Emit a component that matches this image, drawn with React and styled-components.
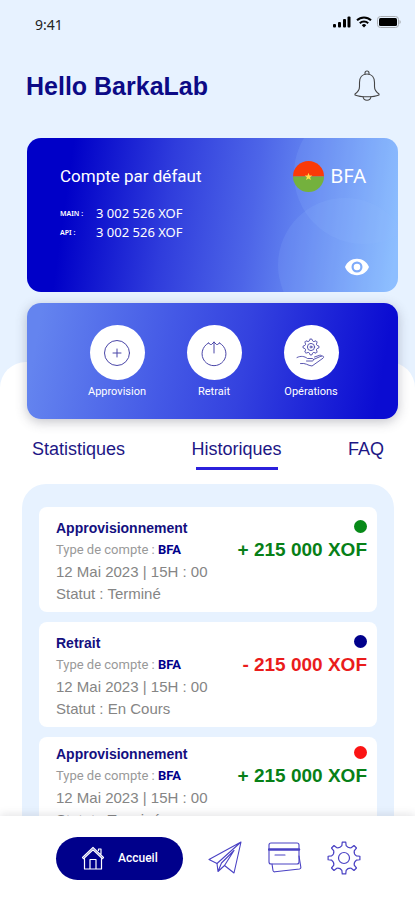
import React from "react";
import styled, { createGlobalStyle } from "styled-components";

const GlobalStyle = createGlobalStyle`
  *, *::before, *::after { box-sizing: border-box; }
  body { margin: 0; background: #fff; font-family: "Liberation Sans", Arial, sans-serif; }
  button { border: 0; padding: 0; background: none; font: inherit; color: inherit; cursor: pointer; }
  h1, h2, h3, p, dl, dd, ul { margin: 0; padding: 0; }
  svg { display: block; }
`;

const navy = "#00008b";
const sky = "#e7f2ff";

const Screen = styled.div`
  display: flex;
  flex-direction: column;
  height: 100vh;
  overflow: hidden;
  background: ${sky};
`;

const Scroller = styled.main`
  flex: 1;
  min-height: 0;
  overflow: hidden;
`;

const StatusBar = styled.div`
  display: flex;
  align-items: center;
  justify-content: space-between;
  height: 48px;
  padding: 0 14px 0 35px;
  color: #222;
  font: 14px "Noto Sans", sans-serif;
`;

const StatusIcons = styled.div`
  display: flex;
  align-items: center;
  gap: 5px;
  padding-bottom: 4px;
`;

const Header = styled.header`
  display: flex;
  align-items: center;
  justify-content: space-between;
  height: 76px;
  padding: 0 34px 0 26px;
`;

const Greeting = styled.h1`
  color: #0c0a86;
  font-size: 25px;
  line-height: 30px;
`;

const AccountCard = styled.section`
  position: relative;
  display: flex;
  flex-direction: column;
  height: 154px;
  margin: 14px 17px 0 27px;
  padding: 22px 32px 16px 33px;
  overflow: hidden;
  border-radius: 14px;
  background: linear-gradient(98deg, #0000c8 12%, #2f3cdc 38%, #4d65e8 60%, #6b90f3 78%, #8cbfff 98%);
  color: #fff;

  &::before, &::after {
    content: "";
    position: absolute;
    border-radius: 50%;
    background: rgba(150, 190, 255, 0.15);
  }
  &::before { width: 140px; height: 140px; top: -34px; right: -36px; }
  &::after { width: 134px; height: 134px; top: 60px; right: -14px; }
  & > * { position: relative; z-index: 1; }
`;

const AccountTop = styled.div`
  display: flex;
  align-items: center;
  justify-content: space-between;
  height: 32px;
`;

const AccountTitle = styled.h2`
  font: 400 17px/24px Roboto, sans-serif;
`;

const Country = styled.div`
  display: flex;
  align-items: center;
  gap: 6px;
  font: 20px/24px "Noto Sans", sans-serif;
`;

const Balances = styled.dl`
  margin-top: 12px;
`;

const Balance = styled.div`
  display: grid;
  grid-template-columns: 36px auto;
  align-items: center;
  height: 19px;
  font: 13px/19px "Noto Sans", sans-serif;

  dt { font-size: 7px; font-weight: 600; }
`;

const EyeButton = styled.button`
  align-self: flex-end;
  margin-top: auto;
  margin-right: -3px;
`;

const Sheet = styled.div`
  display: flow-root;
  margin-top: 70px;
  border-radius: 26px 26px 0 0;
  background: #fff;
`;

const ActionsCard = styled.section`
  display: grid;
  grid-template-columns: repeat(3, 97px);
  justify-content: center;
  height: 116px;
  margin: -59px 17px 0 27px;
  padding: 22px 0 0 3px;
  border-radius: 14px;
  background: linear-gradient(100deg, #6484ef 4%, #4459e6 38%, #3442df 58%, #0b0cd2 94%);
  box-shadow: 0 3px 12px rgba(60, 60, 80, 0.3);
`;

const Action = styled.button`
  display: flex;
  flex-direction: column;
  align-items: center;
  align-self: start;
  gap: 5px;
  color: #fff;
  font: 11px/14px Roboto, sans-serif;
`;

const ActionDisc = styled.span`
  display: grid;
  place-items: center;
  width: 55px;
  height: 55px;
  border-radius: 50%;
  background: #fff;
`;

const Tabs = styled.div`
  display: flex;
  justify-content: space-between;
  padding: 19px 31px 0 32px;
`;

const Tab = styled.button`
  display: flex;
  flex-direction: column;
  align-items: center;
  gap: 7px;
  color: #1d1785;
  font-size: 18px;
  line-height: 22px;

  &::after {
    content: "";
    width: 82px;
    height: 3px;
    background: #2b20dc;
    display: ${(p) => (p["aria-selected"] ? "block" : "none")};
  }
`;

const History = styled.ul`
  display: flex;
  flex-direction: column;
  gap: 10px;
  margin: 14px 21px 0 22px;
  padding: 23px 17px;
  border-radius: 24px 24px 0 0;
  background: ${sky};
  list-style: none;
`;

const Entry = styled.li`
  display: flex;
  justify-content: space-between;
  min-height: 105px;
  padding: ${(p) => (p.$compact ? 6 : 10)}px 10px 7px 17px;
  border-radius: 8px;
  background: #fff;
`;

const EntryTitle = styled.h3`
  color: #14107f;
  font-size: 14px;
  line-height: 22px;
`;

const EntryType = styled.p`
  color: #999;
  font: 13px/22px Roboto, sans-serif;

  strong { color: ${navy}; }
`;

const EntryLine = styled.p`
  color: #858585;
  font-size: 15px;
  line-height: 22px;
`;

const EntryAside = styled.div`
  display: flex;
  flex-direction: column;
  align-items: flex-end;
`;

const StatusDot = styled.span`
  width: 13px;
  height: 13px;
  margin: 3px 0 6px;
  border-radius: 50%;
  background: ${(p) => p.$color};
`;

const Amount = styled.strong`
  color: ${(p) => (p.$negative ? "#ea1c1c" : "#078017")};
  font-size: 19px;
  line-height: 22px;
`;

const BottomNav = styled.nav`
  position: relative;
  display: flex;
  align-items: center;
  justify-content: space-between;
  height: 84px;
  padding: 0 54px 0 56px;
  background: #fff;
  box-shadow: 0 -2px 8px rgba(60, 60, 80, 0.13);
`;

const HomeLink = styled.a`
  display: flex;
  align-items: center;
  gap: 13px;
  width: 127px;
  height: 43px;
  padding-left: 25px;
  border-radius: 22px;
  background: ${navy};
  color: #fff;
  font: 500 12px/16px Roboto, sans-serif;
  text-decoration: none;
`;

const NavLink = styled.a`
  color: #4a42c4;
`;

const gearPath = (cx, cy, teeth, outer, inner) => {
  const step = (Math.PI * 2) / teeth;
  const at = (r, a) => `${(cx + r * Math.sin(a)).toFixed(2)} ${(cy - r * Math.cos(a)).toFixed(2)}`;
  let d = "";
  for (let i = 0; i < teeth; i += 1) {
    const a = i * step;
    const valley = a + step / 2;
    d += `${i ? "L" : "M"}${at(outer, a - step * 0.14)}L${at(outer, a + step * 0.14)}`;
    d += `L${at(inner + 1, a + step * 0.22)}Q${at(inner - 1, valley)} ${at(inner + 1, a + step * 0.78)}`;
  }
  return `${d}Z`;
};

const Line = ({ size, width = 1, children, ...rest }) => (
  <svg width={size} height={size} viewBox={`0 0 ${size} ${size}`} fill="none" stroke="currentColor"
    strokeWidth={width} strokeLinecap="round" strokeLinejoin="round" aria-hidden="true" {...rest}>
    {children}
  </svg>
);

const BellIcon = () => (
  <svg width="28" height="32" viewBox="0 0 28 32" fill="none" stroke="#444" strokeWidth="1.1" strokeLinejoin="round" aria-hidden="true">
    <path d="M12 4.500V3a2 2 0 0 1 4 0v1.500" />
    <path d="M14 4c-4.800 0-7.500 3.600-7.500 8.500v4c0 3.500-1.500 5.500-4.500 7.500v1c3 1.300 7.500 1.800 12 1.800s9-.5 12-1.800v-1c-3-2-4.500-4-4.500-7.500v-4C21.500 7.600 18.800 4 14 4Z" />
    <path d="M10 26.500c.3 2.500 1.700 3.800 4 3.800s3.700-1.300 4-3.800" />
  </svg>
);

const SignalIcon = () => (
  <svg width="18" height="12" viewBox="0 0 18 12" aria-hidden="true">
    <rect y="8" width="3" height="3.500" rx="1" />
    <rect x="5" y="6" width="3" height="5.500" rx="1" />
    <rect x="10" y="3" width="3" height="8.500" rx="1" />
    <rect x="14.500" y="0.500" width="3" height="11" rx="1" />
  </svg>
);

const WifiIcon = () => (
  <svg width="16" height="12" viewBox="0 0 16 12" fill="none" stroke="#000" strokeWidth="2" aria-hidden="true">
    <path d="M1 4.300a10 10 0 0 1 14 0M3.800 7.200a6 6 0 0 1 8.400 0" />
    <path d="M8 11.500 5.800 9.300a3 3 0 0 1 4.400 0Z" fill="#000" stroke="none" />
  </svg>
);

const BatteryIcon = () => (
  <svg width="24" height="12" viewBox="0 0 24 12" aria-hidden="true">
    <rect x="0.500" y="0.500" width="21" height="11" rx="3" fill="none" stroke="#a9adb2" />
    <rect x="2" y="2" width="18" height="8" rx="1.500" />
    <path d="M22.500 4v4a2.200 2.200 0 0 0 0-4Z" fill="#a9adb2" />
  </svg>
);

const FlagIcon = () => (
  <svg width="31" height="31" viewBox="0 0 31 31" aria-hidden="true">
    <path d="M0 15.500a15.500 15.500 0 0 1 31 0Z" fill="#fb3a08" />
    <path d="M0 15.500a15.500 15.500 0 0 0 31 0Z" fill="#74b13d" />
    <path d="m15.500 11.800 1 2.600 2.800.1-2.200 1.700.8 2.700-2.400-1.500-2.400 1.500.8-2.700-2.200-1.700 2.800-.1Z" fill="#ffe04b" />
  </svg>
);

const EyeIcon = () => (
  <svg width="24" height="18" viewBox="0 0 24 18" aria-hidden="true">
    <path fill="#fff" fillRule="evenodd" d="M12 .8C6.500.8 2 4 0 9c2 5 6.500 8.200 12 8.200S22 14 24 9C22 4 17.500.8 12 .8Zm0 13.700a5.500 5.500 0 1 1 0-11 5.500 5.500 0 0 1 0 11Zm0-8.800a3.300 3.300 0 1 0 0 6.600 3.300 3.300 0 0 0 0-6.600Z" />
  </svg>
);

const PlusIcon = () => (
  <Line size={28} color="#4a46a8">
    <circle cx="14" cy="14" r="12.500" />
    <path d="M14 10v8M10 14h8" />
  </Line>
);

const WithdrawIcon = () => (
  <Line size={28} color="#4a46a8">
    <path d="M8.500 4 10.500 5.500M19.500 4l-2 1.500M8.500 4a12 12 0 1 0 11 0" />
    <path d="M14 14V3M11.500 5.500 14 3l2.500 2.500" />
  </Line>
);

const OperationsIcon = () => (
  <Line size={30} width={0.9} color="#4a46a8">
    <path d={gearPath(15, 9, 8, 8, 6)} />
    <circle cx="15" cy="9" r="3.600" />
    <circle cx="15" cy="9" r="1" />
    <path d="M1 19.500c4-2 7.500-1.200 10.500 1h4.500c2 0 2 2.500 0 2.500h-5.500M17.500 21.500l7.500-3.300c2.300-.8 3.500.7 2 2L16 28c-4.500-.5-6-3.300-11.500-2.500M18.500 19l5-1.700c1.200-.3 2 0 2.200.7" />
  </Line>
);

const HomeIcon = () => (
  <Line size={24} width={1.2}>
    <path d="M1.500 11.500 12 1.500l10.500 10-1 1.200L12 3.800l-9.500 8.900ZM17.500 4.500V3H20v5" />
    <path d="M3.500 12.500V23h17V12.500M9 23V13.500h6V23" />
  </Line>
);

const PlaneIcon = () => (
  <Line size={34} width={1.1}>
    <path d="M33 1 1 18.500l8 4L33 1 26 32l-9.500-7.500" />
    <path d="M26 9.500 13.500 22 10 30.500l-1-8M10 30.500l6.500-6L26 9.500" />
  </Line>
);

const CardsIcon = () => (
  <Line size={34} width={1.1}>
    <rect x="1" y="2" width="30" height="21" rx="2" />
    <path d="M1 8.500h30" strokeWidth="2.500" />
    <path d="M7 14h10M4 23l1 6.500c.2 1 1 1.500 2 1.300L31.500 28c1-.2 1.500-1 1.300-2L31 15" />
  </Line>
);

const SettingsIcon = () => (
  <Line size={34} width={1.2}>
    <path d={gearPath(17, 17, 8, 16, 11.5)} />
    <circle cx="17" cy="17" r="5.500" />
  </Line>
);

const entries = [
  { title: "Approvisionnement", status: "Terminé", amount: "+ 215 000 XOF", dot: "#078a18" },
  { title: "Retrait", status: "En Cours", amount: "- 215 000 XOF", dot: "#00008b", negative: true },
  { title: "Approvisionnement", status: "Terminé", amount: "+ 215 000 XOF", dot: "#fb1414", compact: true },
];

const actions = [
  { label: "Approvision", Icon: PlusIcon },
  { label: "Retrait", Icon: WithdrawIcon },
  { label: "Opérations", Icon: OperationsIcon },
];

const tabs = ["Statistiques", "Historiques", "FAQ"];

export default function App() {
  return (
    <Screen>
      <GlobalStyle />
      <Scroller>
        <StatusBar>
          <span>9:41</span>
          <StatusIcons><SignalIcon /><WifiIcon /><BatteryIcon /></StatusIcons>
        </StatusBar>
        <Header>
          <Greeting>Hello BarkaLab</Greeting>
          <button type="button" aria-label="Notifications"><BellIcon /></button>
        </Header>
        <AccountCard>
          <AccountTop>
            <AccountTitle>Compte par défaut</AccountTitle>
            <Country><FlagIcon />BFA</Country>
          </AccountTop>
          <Balances>
            <Balance><dt>MAIN :</dt><dd>3 002 526 XOF</dd></Balance>
            <Balance><dt>API :</dt><dd>3 002 526 XOF</dd></Balance>
          </Balances>
          <EyeButton type="button" aria-label="Masquer le solde"><EyeIcon /></EyeButton>
        </AccountCard>
        <Sheet>
          <ActionsCard>
            {actions.map(({ label, Icon }) => (
              <Action type="button" key={label}>
                <ActionDisc><Icon /></ActionDisc>
                {label}
              </Action>
            ))}
          </ActionsCard>
          <Tabs role="tablist">
            {tabs.map((name) => (
              <Tab type="button" role="tab" key={name} aria-selected={name === "Historiques"}>{name}</Tab>
            ))}
          </Tabs>
          <History>
            {entries.map((entry, i) => (
              <Entry key={i} $compact={entry.compact}>
                <div>
                  <EntryTitle>{entry.title}</EntryTitle>
                  <EntryType>Type de compte : <strong>BFA</strong></EntryType>
                  <EntryLine>12 Mai 2023 | 15H : 00</EntryLine>
                  <EntryLine>Statut : {entry.status}</EntryLine>
                </div>
                <EntryAside>
                  <StatusDot $color={entry.dot} />
                  <Amount $negative={entry.negative}>{entry.amount}</Amount>
                </EntryAside>
              </Entry>
            ))}
          </History>
        </Sheet>
      </Scroller>
      <BottomNav aria-label="Navigation principale">
        <HomeLink href="#accueil" aria-current="page"><HomeIcon />Accueil</HomeLink>
        <NavLink href="#envoyer" aria-label="Envoyer"><PlaneIcon /></NavLink>
        <NavLink href="#cartes" aria-label="Cartes"><CardsIcon /></NavLink>
        <NavLink href="#parametres" aria-label="Paramètres"><SettingsIcon /></NavLink>
      </BottomNav>
    </Screen>
  );
}
